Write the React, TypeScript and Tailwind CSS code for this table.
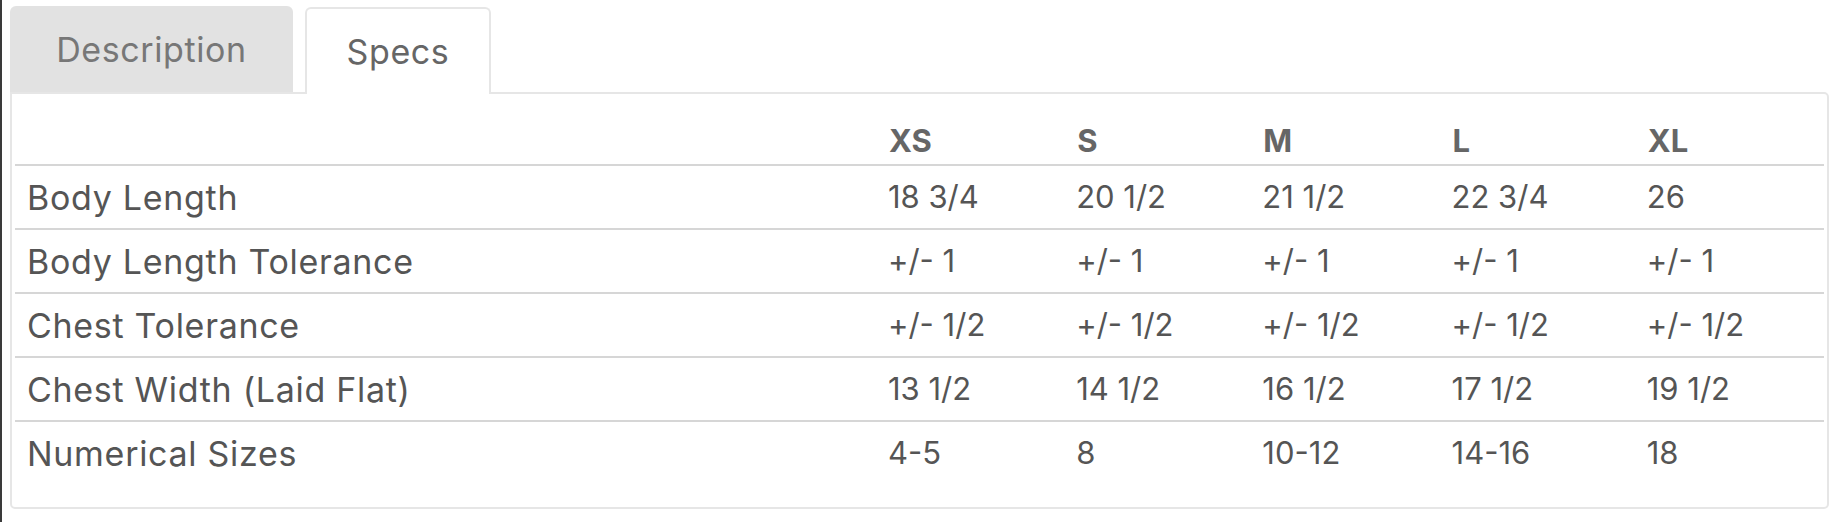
import React from "react";

const sizes = ["XS", "S", "M", "L", "XL"];

const rows: { label: string; values: string[] }[] = [
    { label: "Body Length", values: ["18 3/4", "20 1/2", "21 1/2", "22 3/4", "26"] },
    { label: "Body Length Tolerance", values: ["+/- 1", "+/- 1", "+/- 1", "+/- 1", "+/- 1"] },
    { label: "Chest Tolerance", values: ["+/- 1/2", "+/- 1/2", "+/- 1/2", "+/- 1/2", "+/- 1/2"] },
    { label: "Chest Width (Laid Flat)", values: ["13 1/2", "14 1/2", "16 1/2", "17 1/2", "19 1/2"] },
    { label: "Numerical Sizes", values: ["4-5", "8", "10-12", "14-16", "18"] },
];

const colWidths = ["w-[188px]", "w-[186px]", "w-[189px]", "w-[195px]", "w-[189px]"];

export default function App() {
    return (
        <div className="w-[1834px] h-[522px] bg-white border-l-2 border-[#3a3a3a] font-['Inter',sans-serif] text-[#555]">
            <div className="pl-2 pr-[5px] pt-[6px]">
                {/* Tabs */}
                <div className="flex items-end gap-3 h-[86px]">
                    <button className="h-[86px] w-[283px] rounded-t-[6px] bg-[#e2e2e2] text-[34px] text-[#777] tracking-[0.6px]">
                        Description
                    </button>
                    <button className="w-[186px] rounded-t-[6px] bg-white border-2 border-b-0 border-[#e6e6e6] text-[34px] text-[#666] tracking-[0.6px] relative z-10 -mb-[2px] h-[87px]">
                        Specs
                    </button>
                </div>

                {/* Panel */}
                <div className="border-2 border-[#e6e6e6] rounded-b-[5px] rounded-tr-[5px] px-[3px] pb-[22px]">
                    <table className="w-full border-collapse table-fixed">
                        <thead>
                            <tr className="border-b-2 border-[#d6d6d6] h-[71px]">
                                <th className="w-[860px]" />
                                {sizes.map((s, i) => (
                                    <th
                                        key={s}
                                        className={`${colWidths[i]} text-left align-bottom pl-[13px] pb-0 text-[31px] font-bold text-[#666]`}
                                    >
                                        {s}
                                    </th>
                                ))}
                            </tr>
                        </thead>
                        <tbody>
                            {rows.map((r, ri) => (
                                <tr
                                    key={r.label}
                                    className={`h-[64px] ${ri < rows.length - 1 ? "border-b-2 border-[#d6d6d6]" : ""}`}
                                >
                                    <td className="pl-[12px] text-[34px] tracking-[0.7px] text-[#555]">{r.label}</td>
                                    {r.values.map((v, i) => (
                                        <td key={i} className="pl-[12px] text-[31px] text-[#555] whitespace-nowrap">
                                            {v}
                                        </td>
                                    ))}
                                </tr>
                            ))}
                        </tbody>
                    </table>
                </div>
            </div>
        </div>
    );
}
